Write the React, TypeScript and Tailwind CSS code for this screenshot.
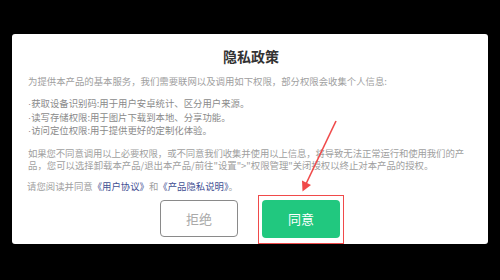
import React from "react";

export default function App() {
  const font = { fontFamily: '"Noto Sans CJK SC", "Noto Sans", sans-serif' };
  const dot = <span style={{ fontFamily: '"Liberation Sans", sans-serif' }}>·</span>;
  return (
    <div className="relative w-[500px] h-[280px] bg-black overflow-hidden" style={font}>
      <div className="flex flex-col w-full h-full pt-[34px] px-[12px]">
        <div className="flex flex-col bg-white rounded-[3px] h-[210px] pt-[12px] pl-4 pr-[10px]">
          <div className="text-center text-[14px] leading-[20px] font-bold text-[#333] pr-[4px]">隐私政策</div>
          <p className="mt-[9px] text-[9.4px] leading-[12px] text-[#a0a0a0]">
            为提供本产品的基本服务，我们需要联网以及调用如下权限，部分权限会收集个人信息:
          </p>
          <div className="mt-[10px] text-[9.4px] leading-[12.5px] text-[#8a8a8a]">
            <div>{dot}获取设备识别码:用于用户安卓统计、区分用户来源。</div>
            <div>{dot}读写存储权限:用于图片下载到本地、分享功能。</div>
            <div>{dot}访问定位权限:用于提供更好的定制化体验。</div>
          </div>
          <p className="mt-[9.5px] text-[9.4px] leading-[12px] text-[#a0a0a0]">
            <span className="whitespace-nowrap tracking-[-0.1px]">如果您不同意调用以上必要权限，或不同意我们收集并使用以上信息，将导致无法正常运行和使用我们的产</span>
            <br />
            <span>品，您可以选择卸载本产品/退出本产品/前往"设置"&gt;"权限管理"关闭授权以终止对本产品的授权。</span>
          </p>
          <p className="mt-[9px] text-[9.4px] leading-[12px] text-[#a0a0a0] -ml-px">
            请您阅读并同意<span className="text-[#3f4f93]">《用户协议》</span>和<span className="text-[#3f4f93]">《产品隐私说明》</span>。
          </p>
          <div className="mt-[8px] flex justify-center gap-[24px] pr-[6px]">
            <div className="w-[78px] h-[37px] rounded-[4px] border-[1.5px] border-[#8a8a8a] flex items-center justify-center text-[13px] text-[#aaa]">
              拒绝
            </div>
            <div className="relative w-[78px] h-[38px] rounded-[4px] bg-[#21c87f] flex items-center justify-center text-[13px] text-white">
              同意
              <div className="absolute -left-[4px] -right-[4px] -top-[5px] -bottom-[6px] border-[1.5px] border-[#f04a4a]" />
            </div>
          </div>
        </div>
      </div>
      <svg className="absolute left-0 top-0" width="500" height="280" viewBox="0 0 500 280">
        <line x1="336" y1="121" x2="305" y2="186" stroke="#f04a4a" strokeWidth="1.6" />
        <polygon points="302.5,191.5 302,180.5 311,185" fill="#f04a4a" />
      </svg>
    </div>
  );
}
